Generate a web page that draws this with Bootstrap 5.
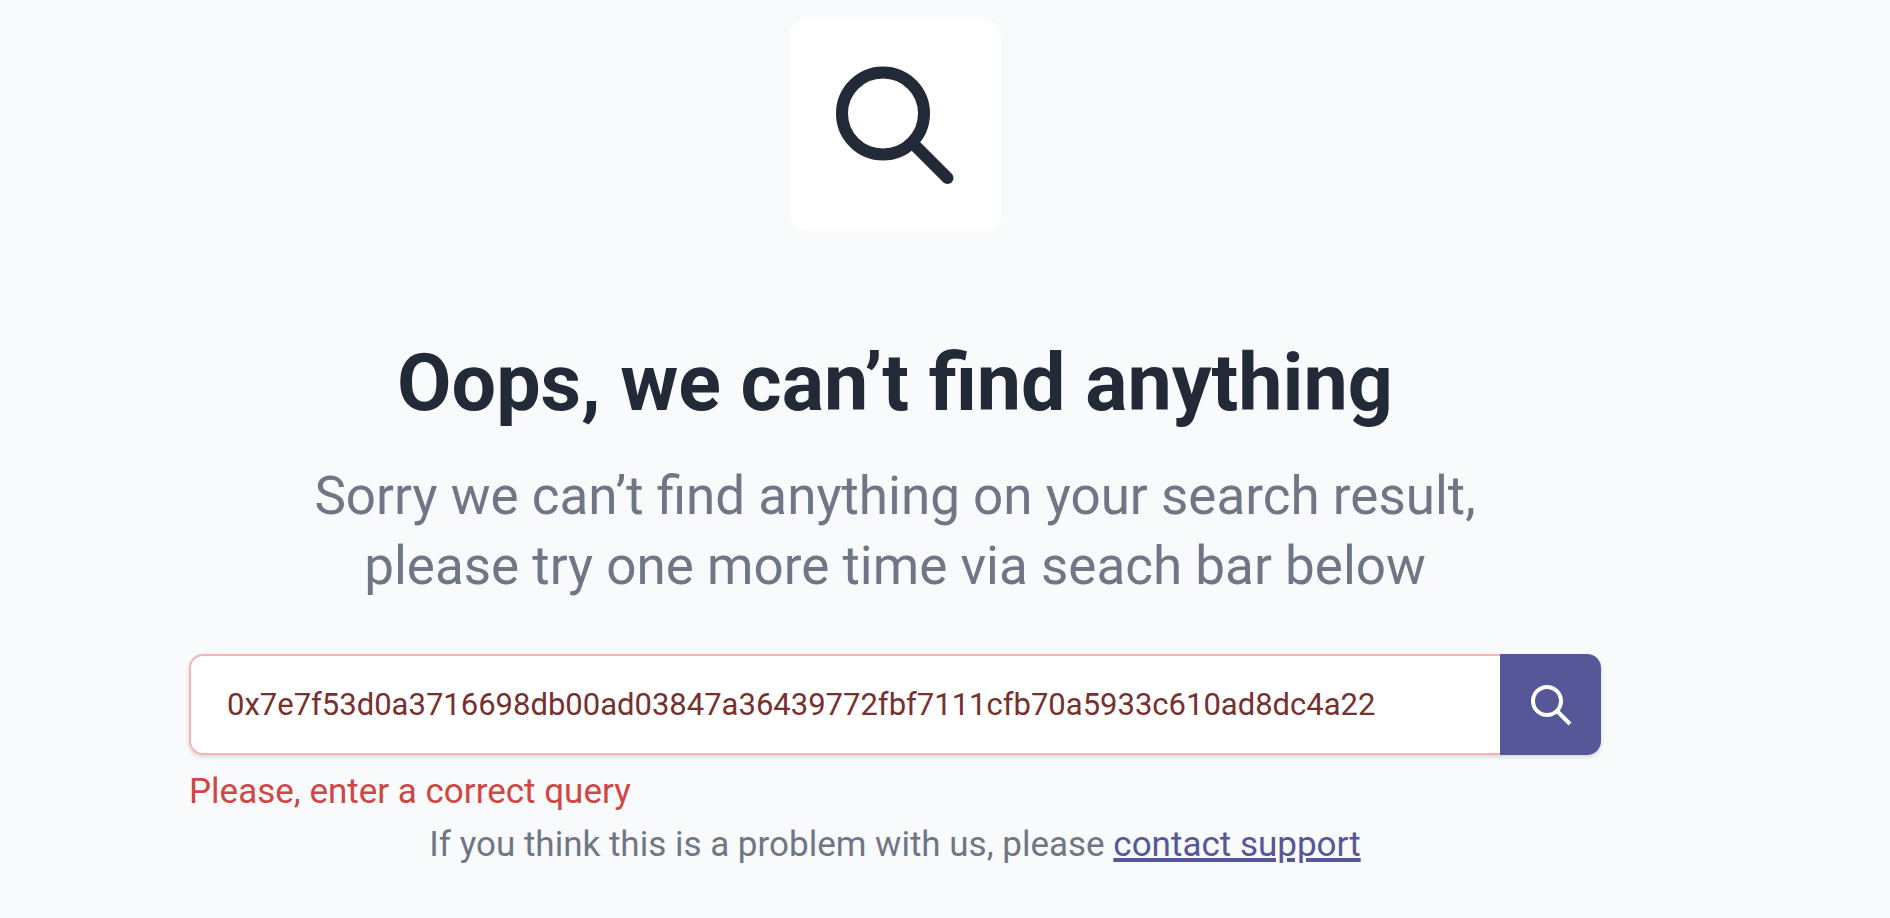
<!DOCTYPE html>
<html lang="en">
<head>
<meta charset="utf-8">
<meta name="viewport" content="width=device-width, initial-scale=1">
<title>Nothing found</title>
<link href="https://cdn.jsdelivr.net/npm/bootstrap@5.3.0/dist/css/bootstrap.min.css" rel="stylesheet">
<style>
  body { background: #f9fafc; color: #6f7685; font-family: Roboto, sans-serif; }
  .page-shell { padding: 19px 100px 32px 0; }
  .result-panel { max-width: 1412px; }
  .icon-tile { width: 212px; height: 212px; border-radius: 18px; margin-bottom: 98px; }
  .headline { font-size: 79px; line-height: 108px; color: #232a37; margin-bottom: 24px; }
  .subline { font-size: 53px; line-height: 70px; margin-bottom: 53px; }
  .search-row { border-radius: 14px; box-shadow: 0 2px 4px rgba(0, 0, 0, .14); }
  .search-row .query-field, .search-row .query-field:focus {
    height: 101px; padding: 0 36px; border: 2px solid #f4b4b4; border-right: 0;
    border-radius: 14px 0 0 14px; background: #fff; color: #78302f; font-size: 31px; box-shadow: none;
  }
  .search-row .query-button, .search-row .query-button:hover {
    width: 101px; border: 0; border-radius: 0 14px 14px 0; background: #555798; color: #fff; padding: 0;
  }
  .note-text { font-size: 35px; line-height: 53px; }
  .error-note { color: #d04642; margin-top: 10px; }
  .note-text a { color: #555798; text-decoration-thickness: 4px; }
</style>
<script src="https://cdn.jsdelivr.net/npm/bootstrap@5.3.0/dist/js/bootstrap.bundle.min.js" defer></script>
</head>
<body>
<main class="page-shell">
  <div class="result-panel mx-auto text-center">
    <div class="icon-tile bg-white mx-auto d-flex align-items-center justify-content-center">
      <svg width="120" height="120" viewBox="0 0 120 120" fill="none" stroke="#232a37" stroke-width="12" aria-hidden="true">
        <circle cx="48" cy="48.500" r="41"/>
        <path d="M79 79.500L112.500 113" stroke-linecap="round"/>
      </svg>
    </div>
    <h1 class="headline fw-bold">Oops, we can’t find anything</h1>
    <p class="subline">Sorry we can’t find anything on your search result,<br>please try one more time via seach bar below</p>
    <form>
      <div class="input-group search-row">
        <input id="query" type="text" class="form-control query-field" aria-label="Search query" aria-describedby="queryError" value="0x7e7f53d0a3716698db00ad03847a36439772fbf7111cfb70a5933c610ad8dc4a22">
        <button type="submit" class="btn query-button d-flex align-items-center justify-content-center" aria-label="Search">
          <svg width="42" height="42" viewBox="0 0 42 42" fill="none" stroke="currentColor" stroke-width="4" aria-hidden="true">
            <circle cx="17" cy="17" r="14"/>
            <path d="M27 27L40 40"/>
          </svg>
        </button>
      </div>
      <div id="queryError" class="error-note note-text text-start">Please, enter a correct query</div>
    </form>
    <p class="note-text mb-0">If you think this is a problem with us, please <a href="#">contact support</a></p>
  </div>
</main>
</body>
</html>
